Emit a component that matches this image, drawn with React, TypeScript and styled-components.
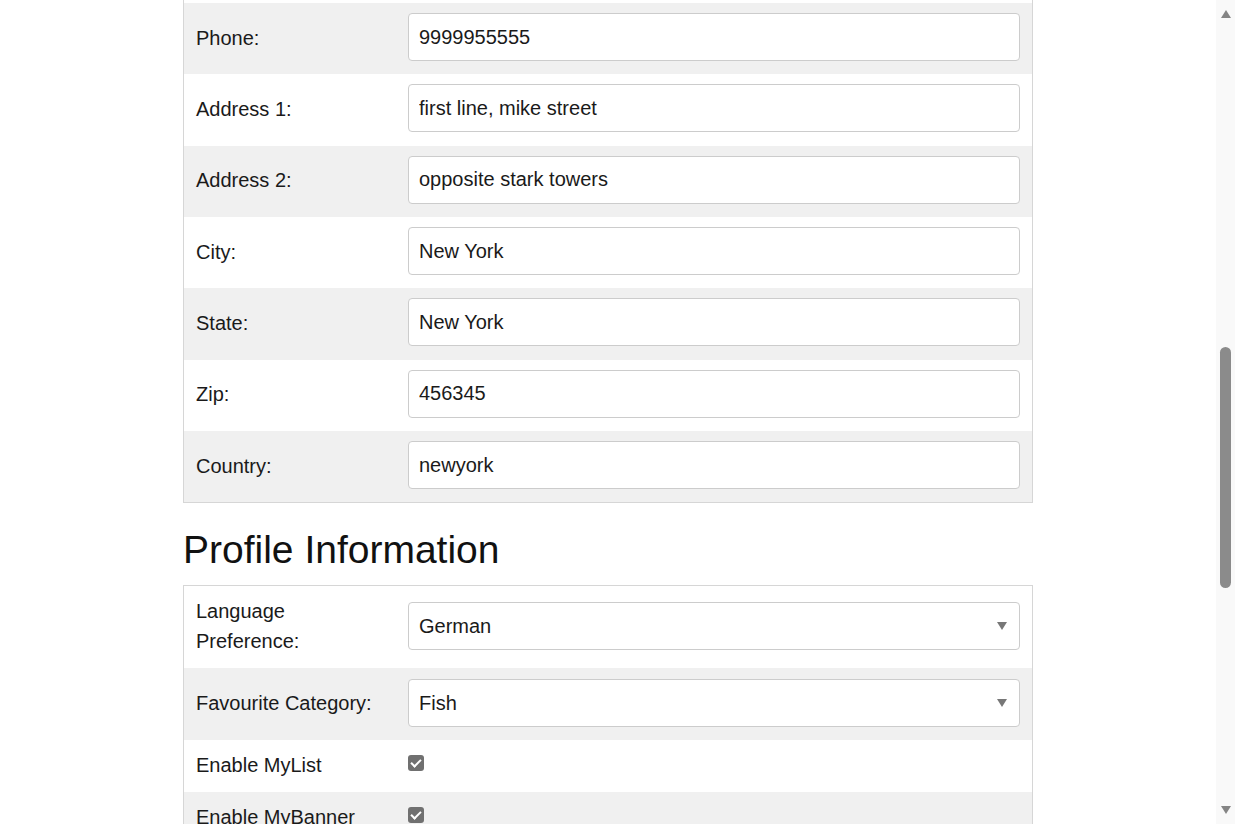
import React, { useLayoutEffect, useRef } from "react";
import styled, { createGlobalStyle } from "styled-components";

const GlobalStyle = createGlobalStyle`
  html, body {
    margin: 0;
    padding: 0;
    background: #ffffff;
    overflow: hidden;
  }
  body {
    font-family: "Liberation Sans", Arial, sans-serif;
    color: #222222;
  }
  * { box-sizing: border-box; }
`;

const Frame = styled.div`
  display: flex;
  height: 100vh;
  width: 100%;
`;

const Viewport = styled.div`
  flex: 1;
  min-width: 0;
  height: 100%;
  overflow: hidden;
`;

const ScrollBar = styled.div`
  flex: none;
  width: 19px;
  height: 100%;
  background: #f9f9f9;
  display: flex;
  flex-direction: column;
  align-items: center;
`;

const ArrowBtn = styled.div<{ $down?: boolean }>`
  flex: none;
  height: 24px;
  width: 100%;
  display: flex;
  justify-content: center;
  align-items: flex-start;
  padding-top: ${(p) => (p.$down ? "6px" : "10px")};
  &::before {
    content: "";
    width: 0;
    height: 0;
    border-left: 5.5px solid transparent;
    border-right: 5.5px solid transparent;
    ${(p) =>
      p.$down
        ? "border-top: 8px solid #858585;"
        : "border-bottom: 8px solid #858585;"}
  }
`;

const Track = styled.div`
  flex: 1;
  width: 100%;
  display: flex;
  flex-direction: column;
  align-items: center;
`;

const Thumb = styled.div<{ $top: number; $height: number }>`
  width: 11px;
  margin-top: ${(p) => p.$top}px;
  height: ${(p) => p.$height}px;
  border-radius: 6px;
  background: #8b8b8b;
`;

const Header = styled.header`
  height: 64px;
  background: #ffffff;
  border-bottom: 1px solid #e5e5e5;
  display: flex;
  align-items: center;
  justify-content: center;
`;

const HeaderInner = styled.div`
  width: 850px;
  font-size: 24px;
  font-weight: 700;
  color: #333;
`;

const Page = styled.main`
  width: 850px;
  margin: 0 auto;
  padding-bottom: 60px;
  display: flex;
  flex-direction: column;
`;

const PageTitle = styled.h1`
  font-size: 48px;
  font-weight: 400;
  line-height: 1.1;
  margin: 40px 0 10px;
  color: #111;
`;

const Intro = styled.p`
  font-size: 20px;
  line-height: 30px;
  margin: 0 0 10px;
  color: #555;
`;

const SectionTitle = styled.h2`
  font-size: 39px;
  font-weight: 400;
  line-height: 44px;
  margin: 25px 0 13px;
  color: #111;
`;

const Table = styled.section`
  border: 1px solid #d6d6d6;
  display: flex;
  flex-direction: column;
`;

const Row = styled.div`
  display: grid;
  grid-template-columns: 25% 75%;
  align-items: center;
  background: #ffffff;
  &:nth-child(even) {
    background: #f0f0f0;
  }
`;

const Label = styled.div`
  padding: 10px 12px 12px;
  font-size: 20px;
  line-height: 30px;
  color: #1a1a1a;
`;

const Field = styled.div`
  padding: 10px 12px;
`;

const TextInput = styled.input`
  display: block;
  width: 100%;
  height: 48px;
  margin: 0 0 3.33px;
  padding: 8px 10px;
  font-family: "Liberation Sans", Arial, sans-serif;
  font-size: 20px;
  line-height: 30px;
  color: #1a1a1a;
  background: #ffffff;
  border: 1px solid #cccccc;
  border-radius: 4px;
  outline: none;
`;

const SelectWrap = styled.div`
  position: relative;
  margin: 1px 0 3px;
`;

const Select = styled.select`
  display: block;
  width: 100%;
  height: 48px;
  padding: 8px 10px;
  font-family: "Liberation Sans", Arial, sans-serif;
  font-size: 20px;
  line-height: 30px;
  color: #1a1a1a;
  background: #ffffff;
  border: 1px solid #cccccc;
  border-radius: 4px;
  appearance: none;
  outline: none;
`;

const Arrow = styled.span`
  position: absolute;
  right: 13px;
  top: 20px;
  width: 0;
  height: 0;
  border-left: 5px solid transparent;
  border-right: 5px solid transparent;
  border-top: 8px solid #777777;
  pointer-events: none;
`;

const CheckField = styled.div`
  padding: 10px 12px;
  display: flex;
  align-items: center;
`;

const Check = styled.input.attrs({ type: "checkbox" })`
  appearance: none;
  display: block;
  position: relative;
  width: 16px;
  height: 16px;
  margin: 0 0 6px;
  border-radius: 3px;
  background: #707070;
  &::after {
    content: "";
    position: absolute;
    left: 5px;
    top: 2px;
    width: 4px;
    height: 8px;
    border: solid #ffffff;
    border-width: 0 2.5px 2.5px 0;
    transform: rotate(45deg);
  }
`;

const Actions = styled.div`
  display: flex;
  gap: 12px;
  margin-top: 30px;
`;

const Button = styled.button<{ $primary?: boolean }>`
  height: 48px;
  padding: 0 24px;
  font-family: "Liberation Sans", Arial, sans-serif;
  font-size: 20px;
  border-radius: 4px;
  border: 1px solid ${(p) => (p.$primary ? "#2e6da4" : "#cccccc")};
  background: ${(p) => (p.$primary ? "#337ab7" : "#ffffff")};
  color: ${(p) => (p.$primary ? "#ffffff" : "#333333")};
`;

const Footer = styled.footer`
  margin-top: 40px;
  padding: 20px 0;
  border-top: 1px solid #e5e5e5;
  font-size: 16px;
  color: #777;
`;

type Item = { label: string; value: string };

const accountRows: Item[] = [
  { label: "Username:", value: "mikeross" },
  { label: "Customer ID:", value: "100234" },
  { label: "Member Since:", value: "2019" },
  { label: "Password:", value: "********" },
];

const personalRows: Item[] = [
  { label: "First Name:", value: "Mike" },
  { label: "Last Name:", value: "Ross" },
  { label: "Email:", value: "mike.ross@example.com" },
  { label: "Phone:", value: "9999955555" },
  { label: "Address 1:", value: "first line, mike street" },
  { label: "Address 2:", value: "opposite stark towers" },
  { label: "City:", value: "New York" },
  { label: "State:", value: "New York" },
  { label: "Zip:", value: "456345" },
  { label: "Country:", value: "newyork" },
];

const securityRows: Item[] = [
  { label: "Question 1:", value: "First pet" },
  { label: "Question 2:", value: "Home town" },
];

function TextRow({ item, rowRef }: { item: Item; rowRef?: React.Ref<HTMLDivElement> }) {
  return (
    <Row ref={rowRef}>
      <Label>{item.label}</Label>
      <Field>
        <TextInput value={item.value} readOnly />
      </Field>
    </Row>
  );
}

function SelectRow({ label, value, options }: { label: string; value: string; options: string[] }) {
  return (
    <Row>
      <Label>{label}</Label>
      <Field>
        <SelectWrap>
          <Select value={value} onChange={() => {}}>
            {options.map((o) => (
              <option key={o}>{o}</option>
            ))}
          </Select>
          <Arrow />
        </SelectWrap>
      </Field>
    </Row>
  );
}

function CheckRow({ label }: { label: string }) {
  return (
    <Row>
      <Label>{label}</Label>
      <CheckField>
        <Check checked readOnly />
      </CheckField>
    </Row>
  );
}

export default function App() {
  const viewportRef = useRef<HTMLDivElement>(null);
  const phoneRef = useRef<HTMLDivElement>(null);

  useLayoutEffect(() => {
    const vp = viewportRef.current;
    const el = phoneRef.current;
    if (vp && el) {
      const offset =
        el.getBoundingClientRect().top - vp.getBoundingClientRect().top + vp.scrollTop - 3;
      vp.scrollTop = offset;
    }
  }, []);

  return (
    <>
      <GlobalStyle />
      <Frame>
        <Viewport ref={viewportRef}>
          <Header>
            <HeaderInner>My Store</HeaderInner>
          </Header>
          <Page>
            <PageTitle>My Account</PageTitle>
            <Intro>Review and update your account details below.</Intro>
            <SectionTitle>Account Information</SectionTitle>
            <Table>
              {accountRows.map((r) => (
                <TextRow key={r.label} item={r} />
              ))}
            </Table>
            <SectionTitle>Personal Information</SectionTitle>
            <Table>
              {personalRows.map((r) => (
                <TextRow key={r.label} item={r} rowRef={r.label === "Phone:" ? phoneRef : undefined} />
              ))}
            </Table>
            <SectionTitle>Profile Information</SectionTitle>
            <Table>
              <SelectRow label="Language Preference:" value="German" options={["English", "German", "French"]} />
              <SelectRow label="Favourite Category:" value="Fish" options={["Meat", "Fish", "Vegetables"]} />
              <CheckRow label="Enable MyList" />
              <CheckRow label="Enable MyBanner" />
              <CheckRow label="Enable Newsletter" />
              <CheckRow label="Enable Notifications" />
            </Table>
            <SectionTitle>Security</SectionTitle>
            <Table>
              {securityRows.map((r) => (
                <TextRow key={r.label} item={r} />
              ))}
            </Table>
            <Actions>
              <Button $primary>Save</Button>
              <Button>Cancel</Button>
            </Actions>
            <Footer>© My Store</Footer>
          </Page>
        </Viewport>
        <ScrollBar>
          <ArrowBtn />
          <Track>
            <Thumb $top={323} $height={241} />
          </Track>
          <ArrowBtn $down />
        </ScrollBar>
      </Frame>
    </>
  );
}
